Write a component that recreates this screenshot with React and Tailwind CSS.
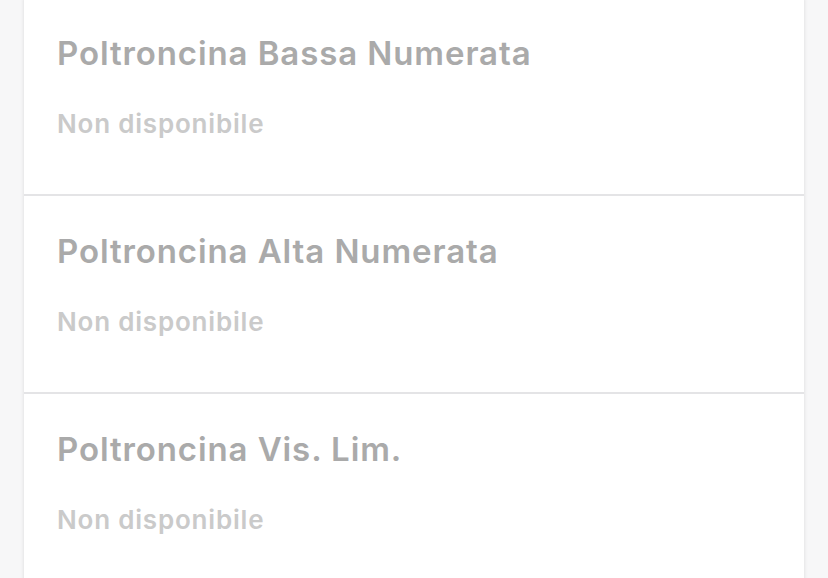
export default function App() {
  const rows = [
    "Poltroncina Bassa Numerata",
    "Poltroncina Alta Numerata",
    "Poltroncina Vis. Lim.",
  ];
  return (
    <div className="w-[828px] h-[578px] overflow-hidden bg-[#f7f7f8]" style={{ fontFamily: "Inter, 'Noto Sans', sans-serif" }}>
      <div className="ml-[24px] w-[780px] -mt-[2px] bg-white shadow-[0_0_4px_rgba(0,0,0,0.12)]">
        {rows.map((t, i) => (
          <div key={i} className="h-[198px] border-b-2 border-[#e4e4e6] pl-[33px] pt-[35px] flex flex-col">
            <div className="text-[33px] leading-[40px] font-semibold text-[#aaaaaa] tracking-[0.9px]">{t}</div>
            <div className="mt-[36px] text-[26px] leading-[30px] font-semibold text-[#cacaca] tracking-[0.8px]">Non disponibile</div>
          </div>
        ))}
      </div>
    </div>
  );
}
